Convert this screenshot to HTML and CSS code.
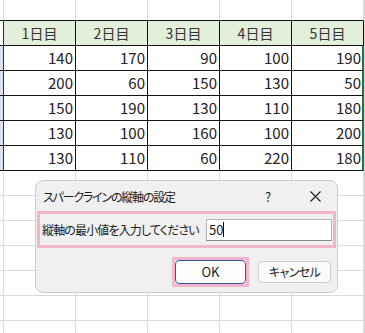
FILE: index.html
```html
<!DOCTYPE html>
<html lang="ja">
<head>
<meta charset="utf-8">
<link rel="stylesheet" href="styles.css">
</head>
<body>
<div class="sheet">
  <div class="c top"></div><div class="c top"></div><div class="c top"></div><div class="c top"></div><div class="c top"></div><div class="c top"></div><div class="c"></div>

  <div class="c strip"></div><div class="c h">1日目</div><div class="c h">2日目</div><div class="c h">3日目</div><div class="c h">4日目</div><div class="c h">5日目</div><div class="c"></div>

  <div class="c strip sel"></div><div class="c d">140</div><div class="c d">170</div><div class="c d">90</div><div class="c d">100</div><div class="c d last">190</div><div class="c"></div>
  <div class="c strip sel"></div><div class="c d">200</div><div class="c d">60</div><div class="c d">150</div><div class="c d">130</div><div class="c d last">50</div><div class="c"></div>
  <div class="c strip sel"></div><div class="c d">150</div><div class="c d">190</div><div class="c d">130</div><div class="c d">110</div><div class="c d last">180</div><div class="c"></div>
  <div class="c strip sel"></div><div class="c d">130</div><div class="c d">100</div><div class="c d">160</div><div class="c d">100</div><div class="c d last">200</div><div class="c"></div>
  <div class="c strip sel"></div><div class="c d">130</div><div class="c d">110</div><div class="c d">60</div><div class="c d">220</div><div class="c d last">180</div><div class="c"></div>

  <div class="c"></div><div class="c"></div><div class="c"></div><div class="c"></div><div class="c"></div><div class="c"></div><div class="c"></div>
  <div class="c"></div><div class="c"></div><div class="c"></div><div class="c"></div><div class="c"></div><div class="c"></div><div class="c"></div>
  <div class="c"></div><div class="c"></div><div class="c"></div><div class="c"></div><div class="c"></div><div class="c"></div><div class="c"></div>
  <div class="c"></div><div class="c"></div><div class="c"></div><div class="c"></div><div class="c"></div><div class="c"></div><div class="c"></div>
  <div class="c"></div><div class="c"></div><div class="c"></div><div class="c"></div><div class="c"></div><div class="c"></div><div class="c"></div>
  <div class="c"></div><div class="c"></div><div class="c"></div><div class="c"></div><div class="c"></div><div class="c"></div><div class="c"></div>
  <div class="c"></div><div class="c"></div><div class="c"></div><div class="c"></div><div class="c"></div><div class="c"></div><div class="c"></div>
</div>

<div class="dialog">
  <div class="dlg-title">
    <span class="title">スパークラインの縦軸の設定</span>
    <span class="help">?</span>
    <span class="close">
      <svg width="11" height="11" viewBox="0 0 11 11"><path d="M0.5 0.5 L10.5 10.5 M10.5 0.5 L0.5 10.5" stroke="#1a1a1a" stroke-width="1.1" fill="none"/></svg>
    </span>
  </div>
  <div class="field">
    <span class="label">縦軸の最小値を入力してください</span>
    <div class="input">50<span class="caret"></span></div>
  </div>
  <div class="buttons">
    <div class="ok-ring"><div class="btn ok">OK</div></div>
    <div class="btn cancel">キャンセル</div>
  </div>
</div>
</body>
</html>
```
FILE: styles.css
```css
html, body {
  margin: 0;
  padding: 0;
  background: #ffffff;
  overflow: hidden;
}
body {
  width: 365px;
  height: 333px;
  position: relative;
  font-family: "Noto Sans CJK JP", "Noto Sans", sans-serif;
}
.sheet {
  display: grid;
  grid-template-columns: 4px repeat(5, 72px) 1fr;
  grid-template-rows: 21px repeat(13, 25px);
}
.c {
  box-sizing: border-box;
  border-right: 1px solid #dadada;
  border-bottom: 1px solid #dadada;
  font-size: 15px;
  color: #222;
  line-height: 24px;
  white-space: nowrap;
  overflow: hidden;
}
.c.top {
  border-bottom-color: #111;
}
.c.strip {
  border-right-color: #333;
  border-bottom-color: #111;
}
.c.strip.sel {
  background: #dbe3ee;
}
.c.h {
  background: #e2efda;
  border-right-color: #111;
  border-bottom-color: #111;
  text-align: center;
  color: #333;
  font-size: 14px;
}
.c.d {
  border-right-color: #111;
  border-bottom-color: #111;
  text-align: right;
  padding-right: 2px;
}
.c.d.last {
  border-right: 2px solid #217346;
  padding-right: 1px;
}

.dialog {
  position: absolute;
  left: 35px;
  top: 180px;
  width: 303px;
  height: 113px;
  box-sizing: border-box;
  background: #f0f0f0;
  border: 1px solid #cdcdcd;
  border-radius: 8px;
  display: flex;
  flex-direction: column;
  font-size: 12px;
  color: #1a1a1a;
  font-feature-settings: "palt";
}
.dlg-title {
  height: 30px;
  display: flex;
  align-items: center;
  padding-left: 7px;
}
.title {
  flex: 1;
  letter-spacing: -1.2px;
}
.help {
  width: 10px;
  text-align: center;
  margin-right: 37px;
  font-size: 13px;
}
.close {
  display: flex;
  margin-right: 16px;
}
.field {
  box-sizing: border-box;
  margin-left: 1px;
  width: 299px;
  height: 37px;
  border: 3px solid #f4b4ca;
  display: flex;
  align-items: center;
  padding-left: 2px;
}
.label {
  flex: none;
  letter-spacing: -0.85px;
}
.input {
  margin-left: auto;
  margin-right: 1px;
  box-sizing: border-box;
  width: 126px;
  height: 22px;
  background: #fff;
  border: 1px solid #b4b4b4;
  border-bottom-color: #8a8a8a;
  padding-left: 2px;
  font-size: 13px;
  line-height: 20px;
  display: flex;
  align-items: center;
}
.caret {
  display: inline-block;
  width: 1px;
  height: 15px;
  background: #000;
}
.buttons {
  display: flex;
  justify-content: flex-end;
  align-items: center;
  gap: 9px;
  margin-top: 9px;
  padding-right: 6px;
}
.ok-ring {
  border: 3px solid #f4b4ca;
  display: flex;
}
.btn {
  box-sizing: border-box;
  width: 73px;
  height: 22px;
  border: 1px solid #cfcfcf;
  border-radius: 4px;
  background: #fbfbfb;
  text-align: center;
  line-height: 20px;
  font-size: 12px;
  letter-spacing: -0.6px;
}
.btn.ok {
  width: 71px;
  height: 24px;
  border-color: #2a5d9c;
  background: #fdfdfd;
  line-height: 22px;
  font-size: 13px;
  letter-spacing: 0;
}
```
